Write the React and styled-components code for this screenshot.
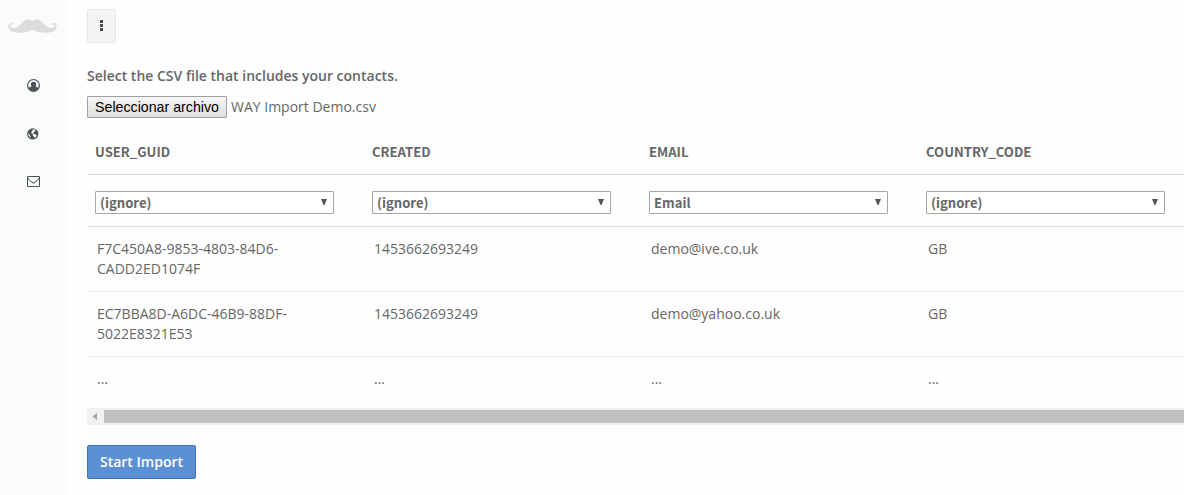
import React from 'react';
import styled, { createGlobalStyle } from 'styled-components';

const GlobalStyle = createGlobalStyle`
  * { box-sizing: border-box; }
  body {
    margin: 0;
    background: #fefefe;
    color: #666;
    font: 14px/20px "Open Sans", sans-serif;
    overflow: hidden;
  }
`;

const headFont = '"Noto Sans CJK SC", "Open Sans", sans-serif';

const Page = styled.div`
  display: flex;
  height: 495px;
  overflow: hidden;
`;

const Sidebar = styled.nav`
  flex: 0 0 67px;
  display: flex;
  flex-direction: column;
  background: #fafcfc;
`;

const Logo = styled.svg`
  width: 49px;
  height: 15px;
  margin: 19px 0 43px 8px;
  fill: #dcdcdc;
`;

const NavItem = styled.a`
  display: flex;
  align-items: center;
  height: 17px;
  margin-bottom: 31px;
  padding-left: 27px;

  svg {
    display: block;
    fill: #4e5456;
  }
`;

const Main = styled.main`
  flex: 1;
  min-width: 0;
  display: flex;
  flex-direction: column;
`;

const Topbar = styled.header`
  height: 58px;
  padding: 9px 20px 0;
  border-bottom: 1px solid #fbfcfc;
`;

const MenuButton = styled.button`
  display: flex;
  flex-direction: column;
  align-items: center;
  justify-content: center;
  gap: 1px;
  width: 29px;
  height: 34px;
  padding: 0 1px 1px 0;
  border: 1px solid #e6e6e6;
  border-radius: 2px;
  background: #f4f4f4;
`;

const Dot = styled.i`
  width: 3px;
  height: 3px;
  background: #4c4c4c;
`;

const Content = styled.section`
  flex: 1;
  min-height: 0;
  padding: 8px 0 0 20px;
`;

const Title = styled.div`
  font-weight: 600;
`;

const FileField = styled.div`
  display: flex;
  align-items: center;
  gap: 4px;
  height: 22px;
  margin-top: 10px;
`;

const FileButton = styled.button`
  width: 140px;
  height: 22px;
  padding: 0;
  border: 1px solid #a0a0a0;
  border-radius: 1px;
  background: linear-gradient(#f6f6f6, #dedede);
  color: #000;
  font: 14.2px/18px "Liberation Sans", Arial, sans-serif;
  white-space: nowrap;
`;

const Grid = styled.div`
  width: 1400px;
  margin-top: 12px;
`;

const Row = styled.div`
  display: grid;
  grid-template-columns: repeat(5, 277px);
  height: ${(p) => p.$height}px;
  border-bottom: 1px solid ${(p) => p.$line || 'transparent'};
`;

const HeadCell = styled.div`
  padding: 12px 8px 0;
  font: 700 13.1px/20px ${headFont};
`;

const FilterCell = styled.div`
  padding: 16px 8px 0;
`;

const Select = styled.div`
  display: flex;
  align-items: center;
  justify-content: space-between;
  width: 239px;
  height: 23px;
  padding: 0 6px 0 4px;
  border: 1px solid #a6a6a6;
  border-radius: 1px;
  background: #fff;
  font: 700 13.1px/20px ${headFont};

  svg {
    fill: #555;
    margin-bottom: 2px;
  }
`;

const Cell = styled.div`
  padding: 12px 10px 0;
  white-space: pre-line;
`;

const ScrollTrack = styled.div`
  display: flex;
  align-items: center;
  height: 17px;
  background: #f1f1f1;
`;

const ScrollArrow = styled.svg`
  flex: 0 0 17px;
  height: 17px;
  fill: #a3a3a3;
`;

const ScrollThumb = styled.div`
  flex: 1;
  height: 13px;
  background: #c1c1c1;
`;

const ImportButton = styled.button`
  width: 109px;
  height: 34px;
  margin-top: 20px;
  padding: 0;
  border: 1px solid #3f74bd;
  border-radius: 2px;
  background: #5b90d5;
  color: #fff;
  font: 600 14px/20px "Open Sans", sans-serif;
`;

const columns = [
  { name: 'USER_GUID', map: '(ignore)' },
  { name: 'CREATED', map: '(ignore)' },
  { name: 'EMAIL', map: 'Email' },
  { name: 'COUNTRY_CODE', map: '(ignore)' },
];

const records = [
  ['F7C450A8-9853-4803-84D6-\nCADD2ED1074F', '1453662693249', 'demo@ive.co.uk', 'GB'],
  ['EC7BBA8D-A6DC-46B9-88DF-\n5022E8321E53', '1453662693249', 'demo@yahoo.co.uk', 'GB'],
];

export default function App() {
  return (
    <Page>
      <GlobalStyle />
      <Sidebar>
        <Logo viewBox="0 0 50 15" preserveAspectRatio="none">
          <path d="M25 2.200C22.500.2 20-.2 17 1.700C13.500 4 11.500 7.500 7.500 8.800C4.500 9.700 2 8.500 2.200 6.700C2.500 5.300 4 5 5 6C5.500 5 4.500 3.700 3.300 3.800C1.300 4 0 6 .4 8.300C1 12 5 13.800 10 13.700C16 13.600 21.500 13.300 25 10.700C28.500 13.300 34 13.600 40 13.700C45 13.800 49 12 49.600 8.300C50 6 48.700 4 46.700 3.800C45.500 3.700 44.500 5 45 6C46 5 47.500 5.300 47.800 6.700C48 8.500 45.500 9.700 42.500 8.800C38.500 7.500 36.500 4 33 1.700C30-.2 27.500.2 25 2.200Z" />
        </Logo>
        <NavItem>
          <svg width="13" height="13" viewBox="0 0 26 26">
            <path fillRule="evenodd" d="M13 0A13 13 0 1 1 13 26A13 13 0 0 1 13 0ZM13 2.200A10.800 10.800 0 0 0 3.800 18.600C4.600 16.400 6.500 15.300 9.300 15C8 13.900 7.700 12.400 7.700 10.600A5.300 5.300 0 0 1 18.300 10.600C18.300 12.400 18 13.900 16.700 15C19.500 15.300 21.400 16.400 22.200 18.600A10.800 10.800 0 0 0 13 2.200Z" />
          </svg>
        </NavItem>
        <NavItem>
          <svg width="12" height="12" viewBox="0 0 24 24">
            <path fillRule="evenodd" d="M11.500.5A11.300 11.300 0 1 1 11.500 23.100A11.300 11.300 0 0 1 11.500.5ZM13 2.500L17.500 4L15.200 6L14.500 8.500L12 10L13 12L16 12L18 14L19.500 14.500C18.500 17.500 17 19 14.500 20L14 17L11.500 14.800L12 12.500L9.500 11L8.500 8L11 6L10.500 4.500ZM2.500 10L5 13L6.500 16.500L7.500 19.500C4 17.500 2.200 14.500 2.500 10Z" />
          </svg>
        </NavItem>
        <NavItem>
          <svg width="13" height="11" viewBox="0 0 26 22">
            <path fillRule="evenodd" d="M2 0H24A2 2 0 0 1 26 2V20A2 2 0 0 1 24 22H2A2 2 0 0 1 0 20V2A2 2 0 0 1 2 0ZM2 6.500V20H24V6.500C21 9.500 18 12 15.500 14Q13 16 10.500 14C8 12 5 9.500 2 6.500ZM2 2C2.200 5 5 7 11 12Q13 13.500 15 12C21 7 23.800 5 24 2Z" />
          </svg>
        </NavItem>
      </Sidebar>
      <Main>
        <Topbar>
          <MenuButton aria-label="Menu">
            <Dot />
            <Dot />
            <Dot />
          </MenuButton>
        </Topbar>
        <Content>
          <Title>Select the CSV file that includes your contacts.</Title>
          <FileField>
            <FileButton>Seleccionar archivo</FileButton>
            <span>WAY Import Demo.csv</span>
          </FileField>
          <Grid>
            <Row $height={45} $line="#ddd">
              {columns.map((c) => (
                <HeadCell key={c.name}>{c.name}</HeadCell>
              ))}
            </Row>
            <Row $height={52} $line="#ddd">
              {columns.map((c) => (
                <FilterCell key={c.name}>
                  <Select>
                    {c.map}
                    <svg width="6" height="6" viewBox="0 0 6 6">
                      <path d="M0 0H6L3.500 6H2.500Z" />
                    </svg>
                  </Select>
                </FilterCell>
              ))}
            </Row>
            {records.map((r) => (
              <Row key={r[0]} $height={65} $line="#eee">
                {r.map((v, i) => (
                  <Cell key={i}>{v}</Cell>
                ))}
              </Row>
            ))}
            <Row $height={51}>
              {columns.map((c) => (
                <Cell key={c.name}>...</Cell>
              ))}
            </Row>
          </Grid>
          <ScrollTrack>
            <ScrollArrow viewBox="0 0 17 17">
              <path d="M10 5V12L5.500 8.500Z" />
            </ScrollArrow>
            <ScrollThumb />
          </ScrollTrack>
          <ImportButton>Start Import</ImportButton>
        </Content>
      </Main>
    </Page>
  );
}
